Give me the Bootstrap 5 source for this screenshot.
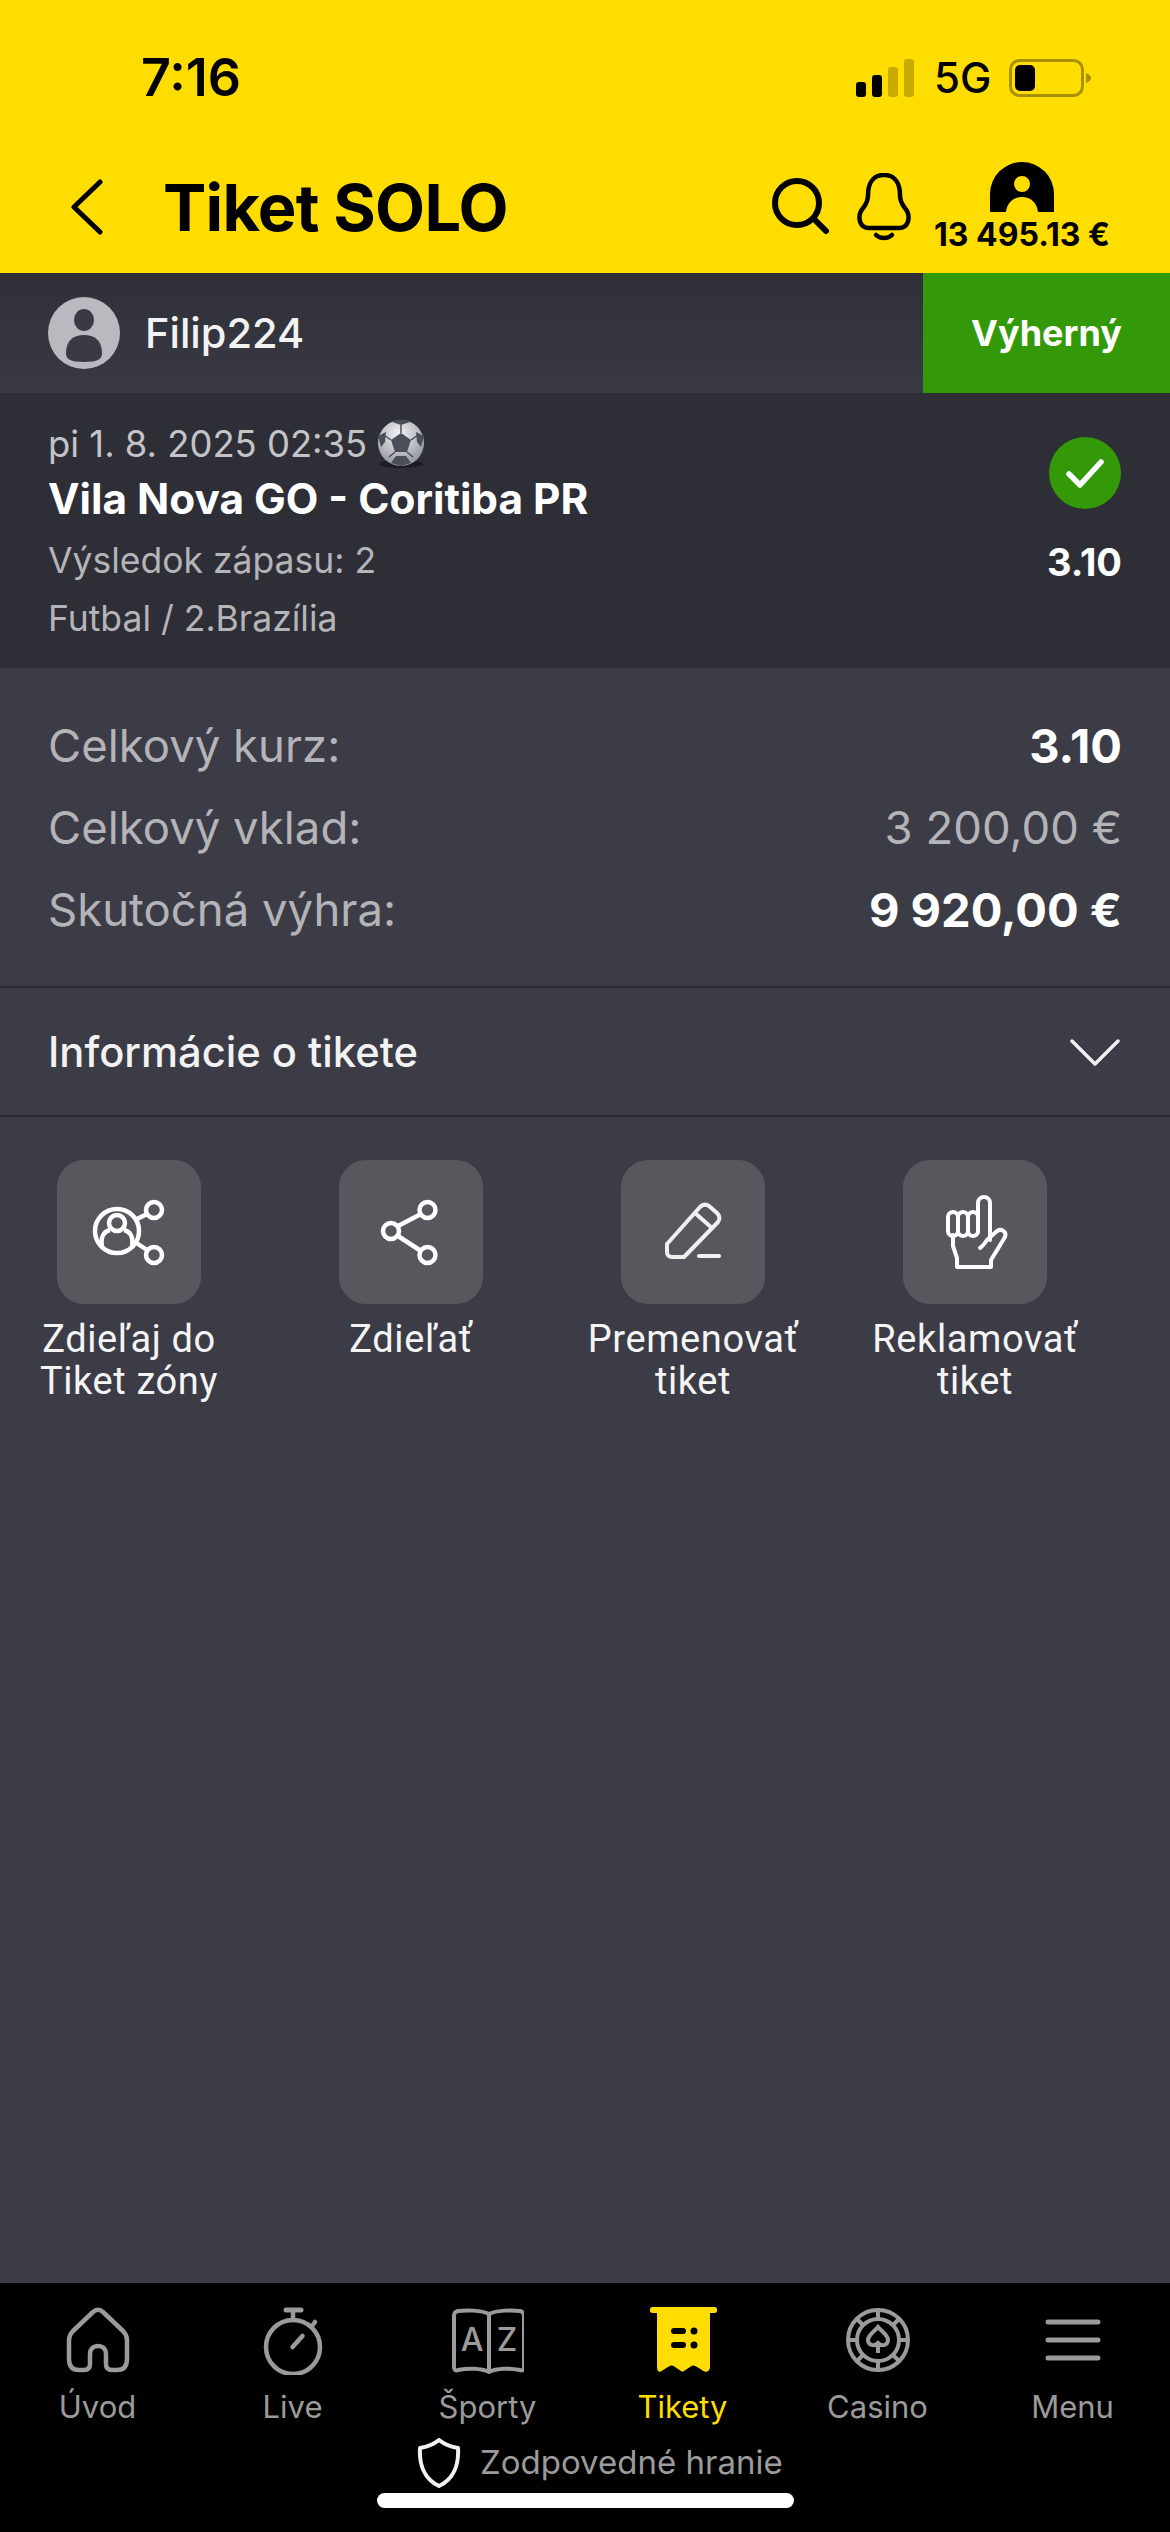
<!DOCTYPE html>
<html lang="en">
<head>
    <meta charset="UTF-8">
    <meta name="viewport" content="width=device-width, initial-scale=1">
    <title>Tiket SOLO</title>
    <link href="https://cdn.jsdelivr.net/npm/bootstrap@5.3.2/dist/css/bootstrap.min.css" rel="stylesheet">
    <style>
        body { background-color: #3c3c46; font-family: "Inter", sans-serif; }
        svg { display: block; flex-shrink: 0; }
        .phone { width: 1170px; height: 2532px; overflow: hidden; }

        .top-head { height: 273px; background-color: #ffdd00; color: #000; }
        .status-row { height: 145px; padding-left: 141px; }
        .status-time { font-size: 52px; font-weight: 600; line-height: 1; margin-top: 52px; width: 715px; }
        .status-icons { margin-top: 59px; }
        .status-5g { font-size: 42px; line-height: 38px; margin-left: 20px; margin-right: 18px; font-weight: 500; }
        .nav-row { height: 123px; padding-left: 71px; }
        .head-title { font-size: 65px; font-weight: 700; letter-spacing: -0.8px; line-height: 1; margin: 0 0 0 60px; width: 609px; padding-top: 2px; }
        .head-bell { margin-left: 26px; }
        .head-acct { margin-left: 20px; width: 180px; }
        .acct-sum { font-size: 32px; font-weight: 700; line-height: 1; white-space: nowrap; margin-top: 7px; }

        .user-bar { height: 120px; background: linear-gradient(#2f2f38, #3a3a44); }
        .user-name { font-size: 41.5px; color: #f2f2f2; font-weight: 500; margin-left: 25px; }
        .state-tag { width: 247px; background-color: #339908; color: #fff; font-size: 36px; font-weight: 700; }

        .match-box { height: 275px; background-color: #2e2e37; padding: 25px 48px 0; }
        .match-date { font-size: 36.4px; color: #c4c4c8; line-height: 52px; height: 52px; }
        .match-name { font-size: 42.3px; font-weight: 700; color: #fff; line-height: 52px; margin-top: 3px; }
        .match-line { font-size: 35.5px; color: #b4b4b9; line-height: 58px; }
        .match-first { margin-top: 7px; }
        .match-check { margin-top: 18px; }
        .match-odd { font-size: 38px; font-weight: 700; color: #fff; line-height: 58px; margin-top: 23px; }

        .sum-box { height: 320px; padding: 37px 48px 0 48px; border-bottom: 2px solid #292930; }
        .sum-row { height: 82px; font-size: 45.5px; color: #b3b3b8; align-items: center; }
        .sum-strong { font-size: 47px; font-weight: 700; color: #fff; }

        .info-row { height: 129px; padding: 2px 50px 0 48px; border-bottom: 2px solid #292930; font-size: 41.7px; font-weight: 500; color: #f2f2f2; }

        .act-row { margin: 43px 0 0 -12px; width: 1128px; }
        .act-item { width: 282px; font-family: "Roboto", sans-serif; font-size: 38px; line-height: 42px; color: #f4f4f4; letter-spacing: 0.6px; }
        .act-tile { width: 144px; height: 144px; border-radius: 27px; background-color: #57585e; margin-bottom: 14px; }

        .tab-bar { height: 249px; background-color: #000; }
        .tab-item { width: 195px; padding-top: 24px; font-size: 31px; line-height: 36px; color: #9b9b9b; }
        .tab-item svg { margin-bottom: 14px; }
        .tab-on { color: #ffdd00; }
        .safe-row { font-size: 33px; color: #9b9b9b; height: 50px; margin-top: 13px; padding-left: 417px; gap: 19px; }
        .home-line { width: 417px; height: 15px; border-radius: 8px; background-color: #fff; margin: 5px 0 0 377px; }
    </style>
</head>
<body>
<div class="phone d-flex flex-column">

    <!-- Yellow header -->
    <header class="top-head">
        <div class="status-row d-flex align-items-start">
            <div class="status-time">7:16</div>
            <div class="status-icons d-flex align-items-center">
                <svg width="58" height="38" viewBox="0 0 58 38">
                    <rect x="0" y="23" width="10" height="15" rx="3" fill="#000"/>
                    <rect x="16" y="16" width="10" height="22" rx="3" fill="#000"/>
                    <rect x="32" y="8" width="10" height="30" rx="3" fill="#c8ab00"/>
                    <rect x="48" y="0" width="10" height="38" rx="3" fill="#c8ab00"/>
                </svg>
                <div class="status-5g">5G</div>
                <svg width="83" height="38" viewBox="0 0 83 38">
                    <rect x="1.5" y="1.5" width="72" height="35" rx="9" fill="none" stroke="#a89000" stroke-width="3"/>
                    <rect x="6" y="6" width="20" height="26" rx="5" fill="#000"/>
                    <path d="M77 14c3 1 5 3 5 5s-2 4-5 5z" fill="#a89000"/>
                </svg>
            </div>
        </div>
        <div class="nav-row d-flex align-items-center">
            <svg width="32" height="56" viewBox="0 0 32 56">
                <path d="M29 3 3 28l26 25" fill="none" stroke="#000" stroke-width="5" stroke-linecap="round" stroke-linejoin="round"/>
            </svg>
            <h1 class="head-title">Tiket SOLO</h1>
            <svg width="58" height="60" viewBox="0 0 58 60">
                <circle cx="25" cy="26" r="22" fill="none" stroke="#000" stroke-width="6"/>
                <path d="M43 43l11 11" stroke="#000" stroke-width="6" stroke-linecap="round"/>
            </svg>
            <svg class="head-bell" width="56" height="68" viewBox="0 0 56 68">
                <path d="M28 2C16 2 12 12 12 22c0 9-4 11-7 16-3 6-2 17 8 17h30c10 0 11-11 8-17-3-5-7-7-7-16C44 12 40 2 28 2z" fill="none" stroke="#000" stroke-width="4.5" stroke-linejoin="round"/>
                <path d="M20 62c4 4 12 4 16 0" fill="none" stroke="#000" stroke-width="4.5" stroke-linecap="round"/>
            </svg>
            <div class="head-acct d-flex flex-column align-items-center">
                <svg width="64" height="50" viewBox="0 0 64 50">
                    <path d="M0 50V32a32 32 0 0 1 64 0v18H48c-1-9-7-15-16-15s-15 6-16 15z" fill="#000"/>
                    <circle cx="32" cy="22" r="8" fill="#ffdd00"/>
                </svg>
                <div class="acct-sum">13 495.13 €</div>
            </div>
        </div>
    </header>

    <!-- User and state -->
    <section class="user-bar d-flex align-items-stretch">
        <div class="flex-grow-1 d-flex align-items-center ps-5">
            <svg width="72" height="72" viewBox="0 0 72 72">
                <circle cx="36" cy="36" r="36" fill="#b9b9c0"/>
                <ellipse cx="36" cy="23" rx="10" ry="11" fill="#3a3a44"/>
                <path d="M18 56c0-13 8-18 18-18s18 5 18 18c0 6-4 9-18 9s-18-3-18-9z" fill="#3a3a44"/>
            </svg>
            <div class="user-name">Filip224</div>
        </div>
        <div class="state-tag d-flex align-items-center justify-content-center">Výherný</div>
    </section>

    <!-- Match -->
    <section class="match-box d-flex justify-content-between">
        <div>
            <div class="match-date d-flex align-items-center gap-2">
                pi 1. 8. 2025 02:35
                <svg width="52" height="50" viewBox="0 0 52 50">
                    <defs>
                        <radialGradient id="ballFill" cx="45%" cy="30%" r="75%">
                            <stop offset="0" stop-color="#f4f4f6"/>
                            <stop offset="1" stop-color="#8c8f99"/>
                        </radialGradient>
                    </defs>
                    <ellipse cx="26" cy="45" rx="22" ry="4" fill="#1c1c22"/>
                    <circle cx="26" cy="24" r="23" fill="url(#ballFill)"/>
                    <path d="M26 14 36 21 32 33H20L16 21z" fill="#4a4e59"/>
                    <path d="M17 3 26 6l9-3-4-2h-10zM3 17l3 11 4-5 1-10zM49 17l-3 11-4-5-1-10zM16 44l10 3 10-3-5-7H21z" fill="#4a4e59"/>
                    <path d="M26 14V6M36 21l7-5M32 33l6 5M20 33l-6 5M16 21l-7-5" stroke="#4a4e59" stroke-width="1.5"/>
                </svg>
            </div>
            <div class="match-name">Vila Nova GO - Coritiba PR</div>
            <div class="match-line match-first">Výsledok zápasu: 2</div>
            <div class="match-line">Futbal / 2.Brazília</div>
        </div>
        <div class="d-flex flex-column align-items-end">
            <svg class="match-check" width="74" height="74" viewBox="0 0 74 74">
                <circle cx="37" cy="37" r="36" fill="#339908"/>
                <path d="M21 38l11 11 21-23" fill="none" stroke="#fff" stroke-width="5.5" stroke-linecap="round" stroke-linejoin="round"/>
            </svg>
            <div class="match-odd">3.10</div>
        </div>
    </section>

    <!-- Totals -->
    <section class="sum-box">
        <div class="sum-row d-flex justify-content-between"><span>Celkový kurz:</span><span class="sum-strong">3.10</span></div>
        <div class="sum-row d-flex justify-content-between"><span>Celkový vklad:</span><span>3 200,00 €</span></div>
        <div class="sum-row d-flex justify-content-between"><span>Skutočná výhra:</span><span class="sum-strong">9 920,00 €</span></div>
    </section>

    <section class="info-row d-flex align-items-center justify-content-between">
        <span>Informácie o tikete</span>
        <svg width="50" height="28" viewBox="0 0 50 28">
            <path d="M2 2l23 23L48 2" fill="none" stroke="#f2f2f2" stroke-width="3.5" stroke-linecap="round" stroke-linejoin="round"/>
        </svg>
    </section>

    <!-- Actions -->
    <main class="flex-grow-1">
        <div class="act-row d-flex">
            <div class="act-item d-flex flex-column align-items-center text-center">
                <div class="act-tile">
                    <svg width="144" height="144" viewBox="0 0 144 144" fill="none" stroke="#fff" stroke-width="4.5">
                        <circle cx="60" cy="71" r="22"/>
                        <circle cx="60" cy="63" r="8"/>
                        <path d="M45 86c-2-10 3-15 8-16M75 86c2-10-3-15-8-16"/>
                        <circle cx="97" cy="50" r="8"/>
                        <circle cx="97" cy="95" r="8"/>
                        <path d="M78 60l12-6M78 82l12 8"/>
                    </svg>
                </div>
                <div>Zdieľaj do<br>Tiket zóny</div>
            </div>
            <div class="act-item d-flex flex-column align-items-center text-center">
                <div class="act-tile">
                    <svg width="144" height="144" viewBox="0 0 144 144" fill="none" stroke="#fff" stroke-width="4.5">
                        <circle cx="52" cy="71" r="8"/>
                        <circle cx="88.5" cy="50" r="8"/>
                        <circle cx="88.5" cy="95" r="8"/>
                        <path d="M59 66l23-12M59 76l23 15"/>
                    </svg>
                </div>
                <div>Zdieľať</div>
            </div>
            <div class="act-item d-flex flex-column align-items-center text-center">
                <div class="act-tile">
                    <svg width="144" height="144" viewBox="0 0 144 144" fill="none" stroke="#f0f0f0" stroke-width="4" stroke-linecap="round" stroke-linejoin="round">
                        <path d="M46 84l33-37c3-3 6-3 9-1l8 7c3 3 3 6 1 9L63 97H51c-3 0-5-2-5-5z"/>
                        <path d="M74 53l17 15"/>
                        <path d="M78 96h20"/>
                    </svg>
                </div>
                <div>Premenovať<br>tiket</div>
            </div>
            <div class="act-item d-flex flex-column align-items-center text-center">
                <div class="act-tile">
                    <svg width="144" height="144" viewBox="0 0 144 144" fill="none" stroke="#fff" stroke-width="4" stroke-linejoin="round" stroke-linecap="round">
                        <path d="M75 72V43a6 6 0 0 1 12 0v37"/>
                        <rect x="45" y="52" width="10" height="24" rx="5"/>
                        <rect x="55" y="52" width="10" height="24" rx="5"/>
                        <rect x="65" y="52" width="10" height="24" rx="5"/>
                        <path d="M77 88c3-2 5-5 7-8l10-9c5-3 10 1 8 6l-14 23v7H54v-9l-4-12v-11"/>
                    </svg>
                </div>
                <div>Reklamovať<br>tiket</div>
            </div>
        </div>
    </main>

    <!-- Bottom tabs -->
    <footer class="tab-bar">
        <div class="d-flex">
            <div class="tab-item d-flex flex-column align-items-center">
                <svg width="72" height="68" viewBox="0 0 72 68" fill="none" stroke="#9b9b9b" stroke-width="4.5" stroke-linejoin="round">
                    <path d="M31 5 11 24c-3 3-4 5-4 9v19c0 7 3 11 10 11h5c4 0 6-2 6-6V47c0-5 3-8 8-8s8 3 8 8v10c0 4 2 6 6 6h5c7 0 10-4 10-11V33c0-4-1-6-4-9L41 5c-3-3-7-3-10 0z"/>
                </svg>
                <span>Úvod</span>
            </div>
            <div class="tab-item d-flex flex-column align-items-center">
                <svg width="72" height="68" viewBox="0 0 72 68" fill="none" stroke="#9b9b9b" stroke-width="4.5" stroke-linecap="round">
                    <circle cx="36" cy="40" r="27"/>
                    <path d="M29 3h15" stroke-width="5"/>
                    <path d="M36 4v9"/>
                    <path d="M55 19l3-4"/>
                    <path d="M35.500 40 45.500 29"/>
                </svg>
                <span>Live</span>
            </div>
            <div class="tab-item d-flex flex-column align-items-center">
                <svg width="72" height="68" viewBox="0 0 72 68" fill="none" stroke="#9b9b9b" stroke-width="4" stroke-linejoin="round">
                    <path d="M37 7C29 3 14 3 6 4 3 5 2 6 2 9v51c0 3 2 4 4 3 10-2 23-2 31 2 8-4 21-4 31-2 2 1 4 0 4-3V9c0-3-1-4-4-5-8-1-23-1-31 3z"/>
                    <path d="M37 7v58"/>
                    <text x="20" y="44" font-family="Inter, sans-serif" font-size="32" font-weight="500" text-anchor="middle" fill="#9b9b9b" stroke="none">A</text>
                    <text x="55" y="44" font-family="Inter, sans-serif" font-size="32" font-weight="500" text-anchor="middle" fill="#9b9b9b" stroke="none">Z</text>
                </svg>
                <span>Športy</span>
            </div>
            <div class="tab-item tab-on d-flex flex-column align-items-center">
                <svg width="72" height="68" viewBox="0 0 72 68">
                    <rect x="3" y="0" width="67" height="6" rx="2.500" fill="#ffdd00"/>
                    <path d="M10 4h53v56c0 5-5 6-8 3l-5-3c-3-2-5-2-7 0l-6 4c-1 1-2 1-3 0l-6-4c-2-2-4-2-7 0l-5 3c-3 3-6 2-6-3z" fill="#ffdd00"/>
                    <rect x="24" y="21" width="15" height="6" rx="3" fill="#000"/>
                    <circle cx="47" cy="24" r="3.500" fill="#000"/>
                    <rect x="24" y="35" width="15" height="6" rx="3" fill="#000"/>
                    <circle cx="47" cy="38" r="3.500" fill="#000"/>
                </svg>
                <span>Tikety</span>
            </div>
            <div class="tab-item d-flex flex-column align-items-center">
                <svg width="72" height="68" viewBox="0 0 72 68" fill="none" stroke="#9b9b9b" stroke-width="4">
                    <circle cx="36" cy="33" r="30"/>
                    <circle cx="36" cy="33" r="21"/>
                    <path d="M36 3v9M36 54v9M6 33h9M57 33h9M15 12l6 6M57 12l-6 6M15 54l6-6M57 54l-6-6"/>
                    <path d="M36 20c4 5 10 8 10 13 0 5-6 7-10 3-4 4-10 2-10-3 0-5 6-8 10-13zM36 36v10"/>
                </svg>
                <span>Casino</span>
            </div>
            <div class="tab-item d-flex flex-column align-items-center">
                <svg width="72" height="68" viewBox="0 0 72 68" fill="none" stroke="#9b9b9b" stroke-width="5" stroke-linecap="round">
                    <path d="M11 15h50M11 33h50M11 51h50"/>
                </svg>
                <span>Menu</span>
            </div>
        </div>
        <div class="safe-row d-flex align-items-center">
            <svg width="44" height="50" viewBox="0 0 44 50">
                <path d="M22 2C17 6 10 9 3 10c-1 16 4 31 19 38 15-7 20-22 19-38-7-1-14-4-19-8z" fill="none" stroke="#f2f2f2" stroke-width="4" stroke-linejoin="round"/>
            </svg>
            <span>Zodpovedné hranie</span>
        </div>
        <div class="home-line"></div>
    </footer>
</div>
<script src="https://cdn.jsdelivr.net/npm/bootstrap@5.3.2/dist/js/bootstrap.bundle.min.js"></script>
</body>
</html>
